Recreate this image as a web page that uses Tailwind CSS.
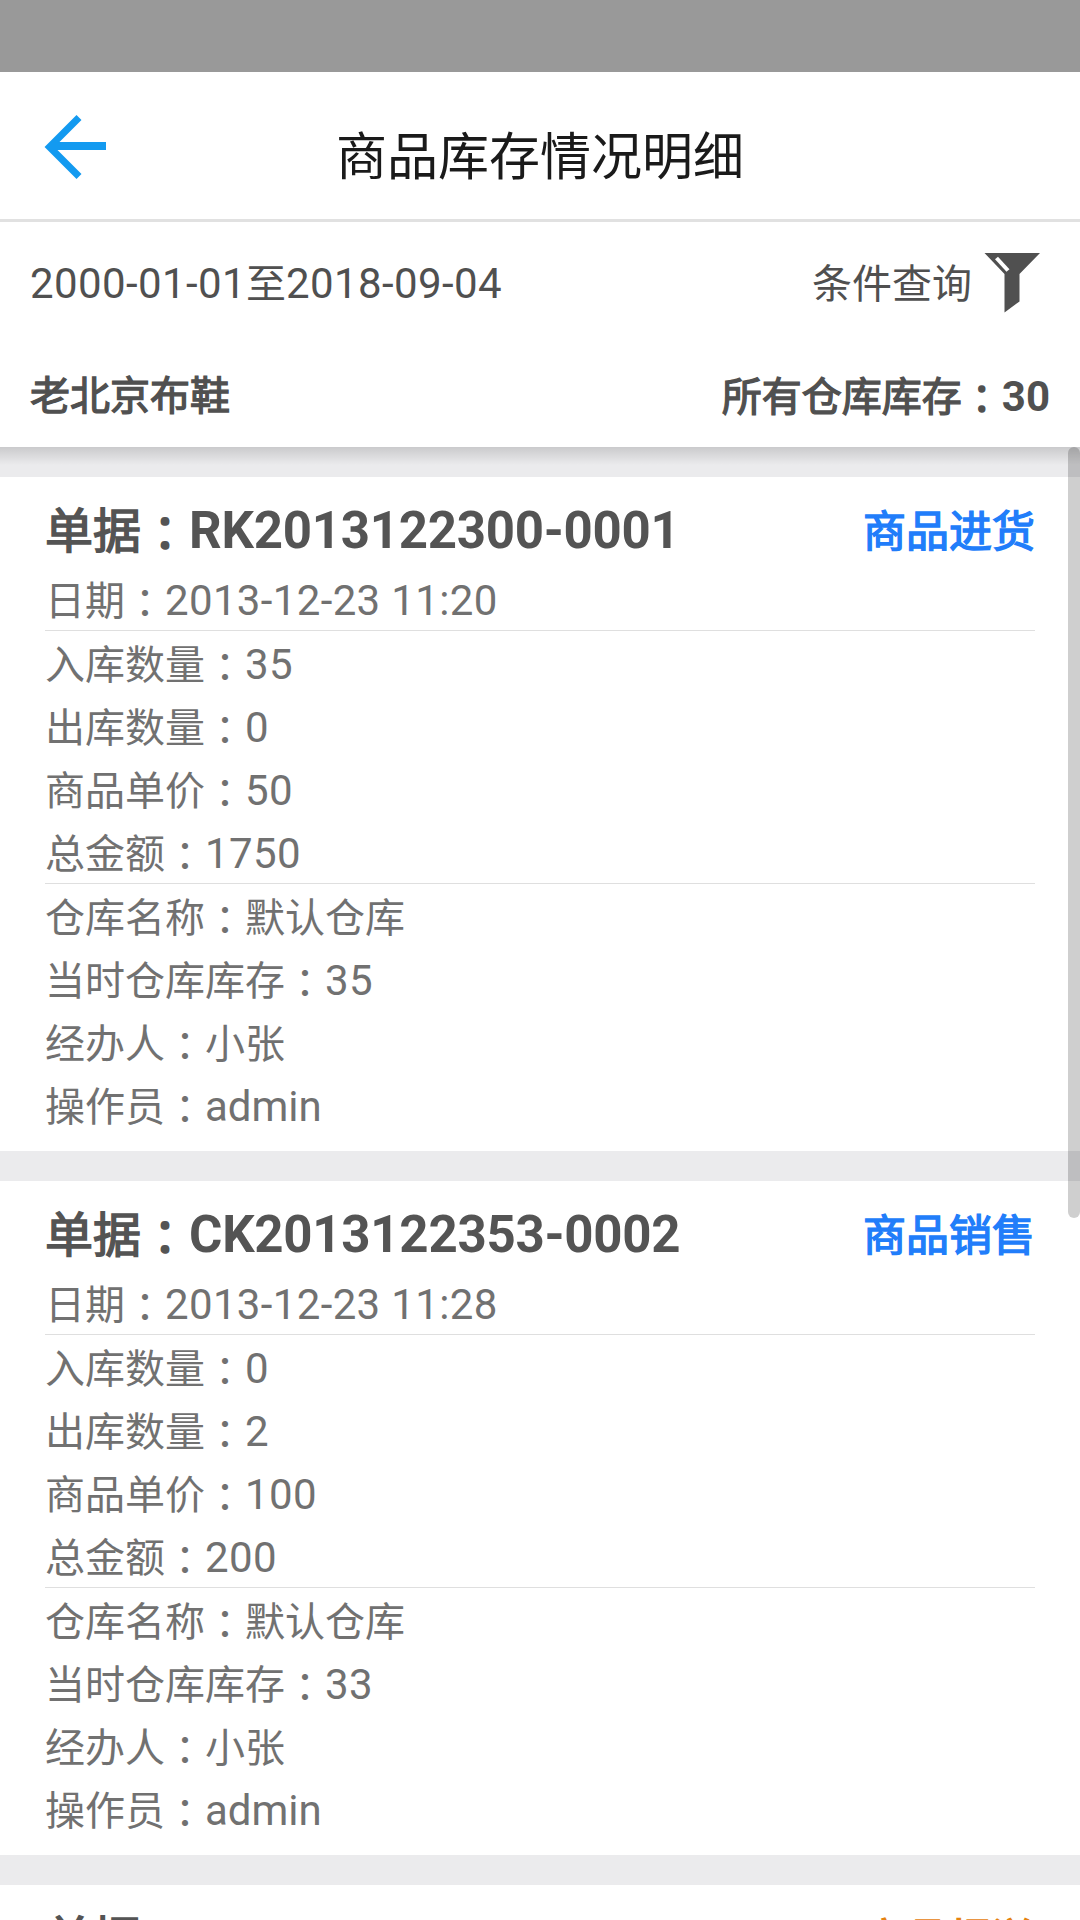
<!DOCTYPE html>
<html lang="en">
<head>
    <meta charset="UTF-8">
    <meta name="viewport" content="width=device-width, initial-scale=1.0">
    <title>商品库存情况明细</title>
    <script src="https://cdn.jsdelivr.net/npm/@tailwindcss/browser@4"></script>
</head>
<body class="h-[1920px] overflow-hidden bg-[#ebebed] font-['Roboto','Noto_Sans_CJK_SC',sans-serif]">
<div class="flex flex-col h-[1920px] overflow-hidden">

    <!-- Status bar -->
    <div class="h-[72px] shrink-0 bg-[#999999]"></div>

    <!-- Title bar -->
    <header class="grid grid-cols-[160px_1fr_160px] h-[150px] shrink-0 bg-white border-b-3 border-[#e1e1e1]">
        <a href="#" class="pl-[44px] pt-[42px]">
            <svg class="w-[64px] h-[66px]" viewBox="0 0 64 66" fill="none" stroke="#139af0">
                <path d="M35 3.5L5.5 33L35 62.500" stroke-width="7"/>
                <path d="M7 32H62" stroke-width="8"/>
            </svg>
        </a>
        <h1 class="pt-[12px] text-center text-[51px] leading-[147px] h-[147px] text-[#1a1a1a] whitespace-nowrap">商品库存情况明细</h1>
    </header>

    <!-- Filter and stock summary -->
    <section class="h-[225px] shrink-0 bg-white text-[#505050]">
        <div class="flex justify-between h-[120px] pl-[30px] pr-[39px] leading-[123px]">
            <div class="text-[42px] tracking-[0.4px]">2000-01-01<span class="text-[40px] tracking-normal">至</span>2018-09-04</div>
            <div class="flex">
                <span class="text-[40px] leading-[125px]">条件查询</span>
                <svg class="ml-[11px] mt-[30px] w-[58px] h-[62px]" viewBox="0 0 58 62">
                    <path d="M1.500 1H57L36.500 22V49.500L21.500 60.500V22Z" fill="#505050"/>
                    <path d="M13.500 6L25 18.500" stroke="#fff" stroke-width="4"/>
                </svg>
            </div>
        </div>
        <div class="flex justify-between pl-[30px] pr-[30px]">
            <div class="text-[40px] leading-[110px] [-webkit-text-stroke:1.3px_#505050]">老北京布鞋</div>
            <div class="text-[42px] leading-[109px] font-bold"><span class="text-[40px] font-normal [-webkit-text-stroke:1.3px_#505050]">所有仓库库存<span class="align-[-3px] leading-none font-['Noto_Sans_CJK_TC']">：</span></span>30</div>
        </div>
    </section>

    <!-- Record list -->
    <main class="relative flex flex-col gap-[30px] pt-[30px]">
        <div class="absolute inset-x-0 top-0 h-[18px] bg-linear-to-b from-black/14 to-transparent"></div>

        <article class="h-[674px] shrink-0 bg-white px-[45px] pt-[15px] text-[42px] leading-[67px] text-[#717171]">
            <div class="flex justify-between h-[75px]">
                <div class="text-[51px] leading-[78px] font-bold tracking-[-0.25px] text-[#545454]"><span class="text-[48px] font-normal tracking-normal [-webkit-text-stroke:1.5px_#545454]">单据<span class="align-[-3px] leading-none font-['Noto_Sans_CJK_TC']">：</span></span>RK2013122300-0001</div>
                <div class="text-[43px] leading-[80px] text-[#217dfa] [-webkit-text-stroke:1.4px_#217dfa]">商品进货</div>
            </div>
            <div class="h-[63px] tracking-[0.35px]"><span class="text-[40px] tracking-normal">日期<span class="align-[-3px] leading-none font-['Noto_Sans_CJK_TC']">：</span></span>2013-12-23 11:20</div>
            <div class="border-y border-[#dfdfdf]">
                <div class="h-[63px] tracking-[0.4px]"><span class="text-[40px] tracking-normal">入库数量<span class="align-[-3px] leading-none font-['Noto_Sans_CJK_TC']">：</span></span>35</div>
                <div class="h-[63px] tracking-[0.4px]"><span class="text-[40px] tracking-normal">出库数量<span class="align-[-3px] leading-none font-['Noto_Sans_CJK_TC']">：</span></span>0</div>
                <div class="h-[63px] tracking-[0.4px]"><span class="text-[40px] tracking-normal">商品单价<span class="align-[-3px] leading-none font-['Noto_Sans_CJK_TC']">：</span></span>50</div>
                <div class="h-[63px] tracking-[0.4px]"><span class="text-[40px] tracking-normal">总金额<span class="align-[-3px] leading-none font-['Noto_Sans_CJK_TC']">：</span></span>1750</div>
            </div>
            <div class="h-[63px]"><span class="text-[40px]">仓库名称<span class="align-[-3px] leading-none font-['Noto_Sans_CJK_TC']">：</span>默认仓库</span></div>
            <div class="h-[63px] tracking-[0.4px]"><span class="text-[40px] tracking-normal">当时仓库库存<span class="align-[-3px] leading-none font-['Noto_Sans_CJK_TC']">：</span></span>35</div>
            <div class="h-[63px]"><span class="text-[40px]">经办人<span class="align-[-3px] leading-none font-['Noto_Sans_CJK_TC']">：</span>小张</span></div>
            <div class="h-[63px]"><span class="text-[40px]">操作员<span class="align-[-3px] leading-none font-['Noto_Sans_CJK_TC']">：</span></span>admin</div>
        </article>

        <article class="h-[674px] shrink-0 bg-white px-[45px] pt-[15px] text-[42px] leading-[67px] text-[#717171]">
            <div class="flex justify-between h-[75px]">
                <div class="text-[51px] leading-[78px] font-bold tracking-[-0.25px] text-[#545454]"><span class="text-[48px] font-normal tracking-normal [-webkit-text-stroke:1.5px_#545454]">单据<span class="align-[-3px] leading-none font-['Noto_Sans_CJK_TC']">：</span></span>CK2013122353-0002</div>
                <div class="text-[43px] leading-[80px] text-[#217dfa] [-webkit-text-stroke:1.4px_#217dfa]">商品销售</div>
            </div>
            <div class="h-[63px] tracking-[0.35px]"><span class="text-[40px] tracking-normal">日期<span class="align-[-3px] leading-none font-['Noto_Sans_CJK_TC']">：</span></span>2013-12-23 11:28</div>
            <div class="border-y border-[#dfdfdf]">
                <div class="h-[63px] tracking-[0.4px]"><span class="text-[40px] tracking-normal">入库数量<span class="align-[-3px] leading-none font-['Noto_Sans_CJK_TC']">：</span></span>0</div>
                <div class="h-[63px] tracking-[0.4px]"><span class="text-[40px] tracking-normal">出库数量<span class="align-[-3px] leading-none font-['Noto_Sans_CJK_TC']">：</span></span>2</div>
                <div class="h-[63px] tracking-[0.4px]"><span class="text-[40px] tracking-normal">商品单价<span class="align-[-3px] leading-none font-['Noto_Sans_CJK_TC']">：</span></span>100</div>
                <div class="h-[63px] tracking-[0.4px]"><span class="text-[40px] tracking-normal">总金额<span class="align-[-3px] leading-none font-['Noto_Sans_CJK_TC']">：</span></span>200</div>
            </div>
            <div class="h-[63px]"><span class="text-[40px]">仓库名称<span class="align-[-3px] leading-none font-['Noto_Sans_CJK_TC']">：</span>默认仓库</span></div>
            <div class="h-[63px] tracking-[0.4px]"><span class="text-[40px] tracking-normal">当时仓库库存<span class="align-[-3px] leading-none font-['Noto_Sans_CJK_TC']">：</span></span>33</div>
            <div class="h-[63px]"><span class="text-[40px]">经办人<span class="align-[-3px] leading-none font-['Noto_Sans_CJK_TC']">：</span>小张</span></div>
            <div class="h-[63px]"><span class="text-[40px]">操作员<span class="align-[-3px] leading-none font-['Noto_Sans_CJK_TC']">：</span></span>admin</div>
        </article>

        <article class="h-[674px] shrink-0 bg-white px-[45px] pt-[15px]">
            <div class="flex justify-between h-[75px]">
                <div class="text-[51px] leading-[78px] font-bold text-[#545454]"><span class="text-[48px] font-normal [-webkit-text-stroke:1.5px_#545454]">单据</span></div>
                <div class="text-[43px] leading-[80px] text-[#e5820f] [-webkit-text-stroke:1.4px_#e5820f]">商品报溢</div>
            </div>
        </article>
    </main>
</div>

<!-- Scroll indicator -->
<div class="absolute z-20 right-0 top-[447px] w-[12px] h-[771px] rounded-full bg-black/19"></div>
</body>
</html>
